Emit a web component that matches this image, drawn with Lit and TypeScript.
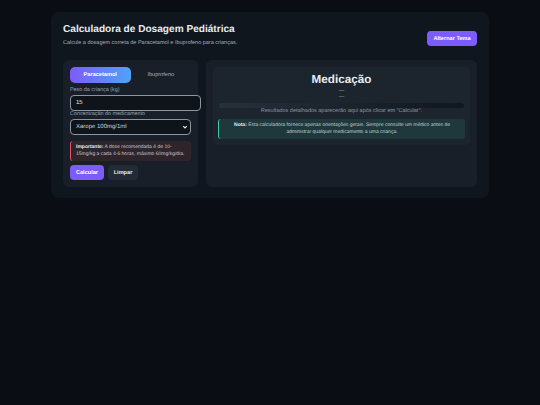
import { LitElement, html, css } from "lit";
import { customElement } from "lit/decorators.js";

@customElement("app-root")
export class AppRoot extends LitElement {
  static styles = css`
    :host { display: block; min-height: 405px; background: #0a0e14; font-family: "Liberation Sans", Arial, sans-serif; color: #e6edf3; box-sizing: border-box; padding: 12px 51px 0; text-rendering: geometricPrecision; }
    * { box-sizing: border-box; }
    .container { height: 186px; background: #10161e; border-radius: 8px; padding: 12px 12px 11px; display: flex; flex-direction: column; }
    header { flex: none; display: flex; justify-content: space-between; align-items: flex-start; height: 28px; margin-bottom: 8px; }
    h1 { margin: 0; font-size: 10.1px; line-height: 11px; font-weight: 700; color: #e6edf3; }
    .sub { margin: 5px 0 0; font-size: 5.5px; line-height: 7px; color: #a3aeb9; }
    .theme { margin-top: 7px; width: 50px; height: 15px; border: 0; padding: 0; border-radius: 4px; background: #7c5cfc; color: #fff; font: 700 5.6px "Liberation Sans", Arial, sans-serif; text-rendering: geometricPrecision; }
    .main { display: flex; gap: 8px; height: 127px; }
    .left { width: 135px; flex: none; background: #181f28; border-radius: 6px; padding: 7px; }
    .tabs { display: flex; height: 16px; width: 121px; }
    .tab { flex: 1; display: flex; align-items: center; justify-content: center; font-size: 5.6px; color: #a3aeb9; border-radius: 5px; }
    .tab.on { background: linear-gradient(90deg, #7c5cfc, #4fa3f7); color: #fff; font-weight: 700; }
    label { display: block; font-size: 5.4px; line-height: 7px; color: #98a3af; }
    .l1 { margin-top: 4px; }
    input, .select { display: block; height: 16px; border: 1px solid #8b96a3; border-radius: 4px; background: #0f141b; font: 6px "Liberation Sans", Arial, sans-serif; color: #e6edf3; padding: 0 5px; outline: none; margin: 1px 0 0; }
    input { width: 131px; text-rendering: geometricPrecision; }
    .select { width: 121px; color: #c9d1d9; display: flex; align-items: center; justify-content: space-between; padding-right: 2px; }
    .select svg { width: 6px; height: 6px; flex: none; }
    .alert { margin-top: 6px; width: 121px; height: 20px; background: #2e2429; border-left: 1px solid #e5566d; border-radius: 3px; padding: 3px 5px; font-size: 5px; line-height: 7px; color: #c2c9d2; }
    .alert b { color: #e6edf3; }
    .btns { display: flex; gap: 4px; margin-top: 4px; }
    .btn { height: 15px; display: flex; align-items: center; justify-content: center; border-radius: 4px; font-size: 5.6px; font-weight: 700; color: #e6edf3; }
    .calc { width: 34px; background: #7c5cfc; color: #fff; }
    .clear { width: 30px; background: #232c36; }
    .right { flex: 1; background: #181f28; border-radius: 6px; padding: 7px; }
    .card { height: 78px; background: #1c242d; border-radius: 5px; padding: 6px 5px 0; text-align: center; }
    h2 { margin: 0; font-size: 11.7px; line-height: 14px; font-weight: 700; color: #e6edf3; }
    .dash { font-size: 5.5px; line-height: 6px; color: #a3aeb9; }
    .dash.first { margin-top: 1px; }
    .bar { height: 5px; margin: 3px 1px 0; border-radius: 3px; background: linear-gradient(90deg, #26313c, #10161e); }
    .hint { font-size: 5.5px; line-height: 7px; margin-top: 0; color: #8b96a3; }
    .note { margin-top: 4px; height: 20px; background: #1f383c; border-left: 1px solid #3fc8b0; border-radius: 3px; padding: 3px 6px; font-size: 5px; line-height: 7px; color: #c2ccd3; }
    .note b { color: #e6edf3; }
  `;

  render() {
    return html`
      <div class="container">
        <header>
          <div>
            <h1>Calculadora de Dosagem Pediátrica</h1>
            <p class="sub">Calcule a dosagem correta de Paracetamol e Ibuprofeno para crianças.</p>
          </div>
          <button class="theme">Alternar Tema</button>
        </header>
        <div class="main">
          <section class="left">
            <div class="tabs">
              <div class="tab on">Paracetamol</div>
              <div class="tab">Ibuprofeno</div>
            </div>
            <label class="l1">Peso da criança (kg)</label>
            <input value="15" />
            <label>Concentração do medicamento</label>
            <div class="select">
              <span>Xarope 100mg/1ml</span>
              <svg viewBox="0 0 10 10"><path d="M2 3.5 L5 6.5 L8 3.5" fill="none" stroke="#e6edf3" stroke-width="1.8"/></svg>
            </div>
            <div class="alert"><b>Importante:</b> A dose recomendada é de 10-15mg/kg a cada 4-6 horas, máximo 60mg/kg/dia.</div>
            <div class="btns">
              <div class="btn calc">Calcular</div>
              <div class="btn clear">Limpar</div>
            </div>
          </section>
          <section class="right">
            <div class="card">
              <h2>Medicação</h2>
              <div class="dash first">—</div>
              <div class="dash">—</div>
              <div class="bar"></div>
              <div class="hint">Resultados detalhados aparecerão aqui após clicar em "Calcular".</div>
              <div class="note"><b>Nota:</b> Esta calculadora fornece apenas orientações gerais. Sempre consulte um médico antes de administrar qualquer medicamento a uma criança.</div>
            </div>
          </section>
        </div>
      </div>
    `;
  }
}
